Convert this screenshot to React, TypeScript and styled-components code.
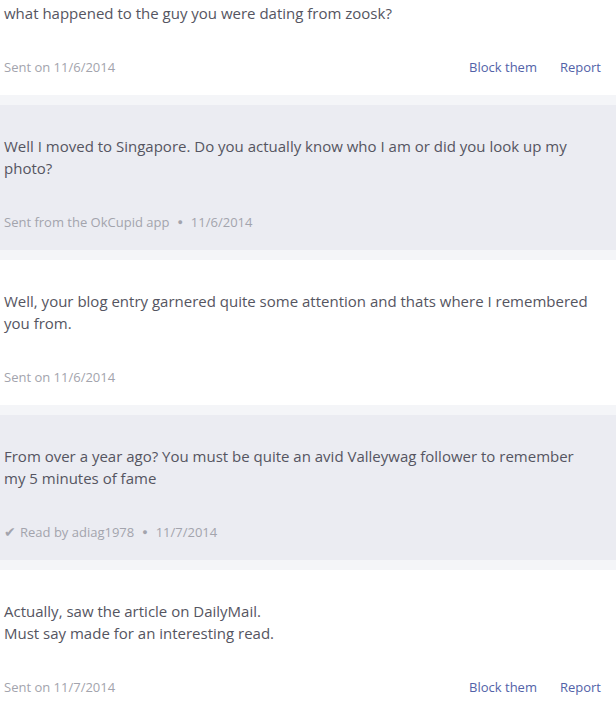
import React from "react";
import styled, { createGlobalStyle } from "styled-components";

const Global = createGlobalStyle`
  html, body { margin: 0; padding: 0; background: #f4f5f8; overflow: hidden; }
  body { font-family: "Open Sans", "Liberation Sans", sans-serif; }
`;

const Thread = styled.div`
  display: flex;
  flex-direction: column;
  gap: 10px;
  margin-top: -28px;
`;

const Card = styled.div<{ $mine?: boolean }>`
  background: ${(p) => (p.$mine ? "#ebecf2" : "#ffffff")};
  padding: 30px 22px 18px 4px;
  display: flex;
  flex-direction: column;
  gap: 33px;
`;

const Body = styled.div`
  font-size: 15px;
  line-height: 22px;
  color: #555561;
`;

const Meta = styled.div`
  display: flex;
  align-items: center;
  justify-content: space-between;
  font-size: 13px;
  line-height: 20px;
  color: #a3a4ad;
  margin-right: -7px;
`;

const Info = styled.div`
  display: flex;
  align-items: center;
`;

const Dot = styled.span`
  margin: 0 8px;
  font-size: 9px;
  color: #a3a4ad;
`;

const Check = styled.span`
  margin-right: 4px;
  font-size: 14px;
`;

const Actions = styled.div`
  display: flex;
  gap: 23px;
`;

const Link = styled.a`
  color: #5262a8;
  text-decoration: none;
  cursor: pointer;
`;

type Msg = {
  mine?: boolean;
  text: React.ReactNode;
  meta: React.ReactNode;
  actions?: boolean;
};

const msgs: Msg[] = [
  { text: "what happened to the guy you were dating from zoosk?", meta: "Sent on 11/6/2014", actions: true },
  {
    mine: true,
    text: "Well I moved to Singapore. Do you actually know who I am or did you look up my photo?",
    meta: (
      <>
        Sent from the OkCupid app<Dot>●</Dot>11/6/2014
      </>
    ),
  },
  {
    text: "Well, your blog entry garnered quite some attention and thats where I remembered you from.",
    meta: "Sent on 11/6/2014",
  },
  {
    mine: true,
    text: "From over a year ago? You must be quite an avid Valleywag follower to remember my 5 minutes of fame",
    meta: (
      <>
        <Check>✔</Check>Read by adiag1978<Dot>●</Dot>11/7/2014
      </>
    ),
  },
  {
    text: (
      <>
        Actually, saw the article on DailyMail.
        <br />
        Must say made for an interesting read.
      </>
    ),
    meta: "Sent on 11/7/2014",
    actions: true,
  },
];

export default function App() {
  return (
    <>
      <Global />
      <Thread>
        {msgs.map((m, i) => (
          <Card key={i} $mine={m.mine}>
            <Body>{m.text}</Body>
            <Meta>
              <Info>{m.meta}</Info>
              {m.actions && (
                <Actions>
                  <Link>Block them</Link>
                  <Link>Report</Link>
                </Actions>
              )}
            </Meta>
          </Card>
        ))}
      </Thread>
    </>
  );
}
